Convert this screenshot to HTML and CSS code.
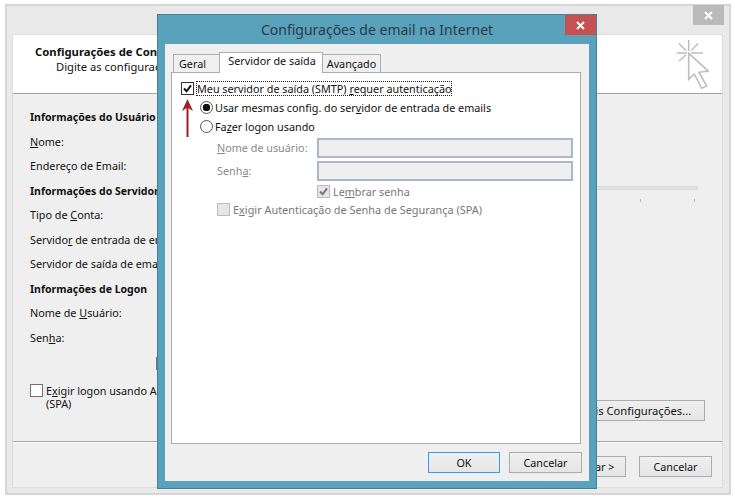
FILE: index.html
```html
<!DOCTYPE html>
<html lang="pt">
<head>
<meta charset="utf-8">
<title>Configurações de email na Internet</title>
<link rel="stylesheet" href="styles.css">
</head>
<body>
<div class="desk">
  <section class="win">
    <div class="win-bar"><button class="win-close"><svg viewBox="0 0 9 9" width="9" height="9"><path d="M1 1l7 7M8 1L1 8" class="x-stroke"/></svg></button></div>
    <div class="win-body">
      <header class="win-head">
        <div class="head-title">Configurações de Conta</div>
        <div class="head-sub">Digite as configurações</div>
        <svg class="head-icon" viewBox="0 0 33 50" width="33" height="50">
          <path class="cur-ray" d="M12.700 0v11M0.700 13H11M15 13h12M3 3.500l7 7M22 3.500l-6.500 7M3 21l7-6"/>
          <path class="cur-arrow" d="M12.700 13.300L32.300 31 23 32.300 30.700 46 25.700 48.300 18.300 34 12.700 39.300z"/>
        </svg>
      </header>
      <div class="win-main">
        <div class="form">
          <div class="row bold">Informações do Usuário</div>
          <div class="row"><u>N</u>ome:</div>
          <div class="row">Endereço de Email:</div>
          <div class="row bold">Informações do Servidor</div>
          <div class="row">Tipo de <u>C</u>onta:</div>
          <div class="row">Servido<u>r</u> de entrada de emails:</div>
          <div class="row">Servidor de saída de emails:</div>
          <div class="row bold">Informações de Logon</div>
          <div class="row">Nome de <u>U</u>suário:</div>
          <div class="row">Sen<u>h</u>a:</div>
          <div class="spa">
            <span class="box box-back"></span>
            <span class="spa-text">E<u>x</u>igir logon usando Autenticação<br>(SPA)</span>
          </div>
        </div>
        <div class="slider"></div>
        <div class="tick tick-a"></div>
        <div class="tick tick-b"></div>
        <div class="stub"></div>
        <button class="btn btn-more">Mais Configurações...</button>
      </div>
      <footer class="win-foot">
        <button class="btn">Avançar &gt;</button>
        <button class="btn">Cancelar</button>
      </footer>
    </div>
  </section>

  <section class="dlg">
    <div class="dlg-bar">
      <div class="dlg-title">Configurações de email na Internet</div>
      <button class="dlg-close"><svg viewBox="0 0 9 9" width="9" height="9"><path d="M1 1l7 7M8 1L1 8" class="x-stroke"/></svg></button>
    </div>
    <div class="dlg-body">
      <div class="tabs">
        <div class="tab tab-a">Geral</div>
        <div class="tab tab-on">Servidor de saída</div>
        <div class="tab tab-c">Avançado</div>
      </div>
      <div class="panel">
        <div class="auth">
          <span class="box box-on"><svg viewBox="0 0 13 13" width="13" height="13"><path class="chk" d="M3 6.500l2.600 2.800L10 3.400"/></svg></span>
          <span class="focus">Meu servidor de saída (SMTP) <u>r</u>equer autenticação</span>
        </div>
        <div class="radio-row"><span class="radio radio-on"></span><span>Usar mesmas config. do ser<u>v</u>idor de entrada de emails</span></div>
        <div class="radio-row radio-second"><span class="radio"></span><span>Fa<u>z</u>er logon usando</span></div>
        <div class="fields">
          <label class="off"><u>N</u>ome de usuário:</label><span class="input"></span>
          <label class="off">Senh<u>a</u>:</label><span class="input"></span>
          <span class="remember"><span class="box box-off"><svg viewBox="0 0 13 13" width="13" height="13"><path class="chk chk-off" d="M3 6.500l2.600 2.800L10 3.400"/></svg></span><span class="off-dim">Le<u>m</u>brar senha</span></span>
        </div>
        <div class="spa-off"><span class="box box-off"></span><span class="off-dim">E<u>x</u>igir Autenticação de Senha de Segurança (SPA)</span></div>
        <svg class="arrow" viewBox="0 0 13 38" width="13" height="38"><path class="arrow-line" d="M6.500 4v34"/><path class="arrow-head" d="M6.500 0L12 12 6.500 8.500 1 12z"/></svg>
      </div>
      <footer class="dlg-foot">
        <button class="btn btn-ok">OK</button>
        <button class="btn">Cancelar</button>
      </footer>
    </div>
  </section>
</div>
</body>
</html>
```
FILE: styles.css
```css
* { box-sizing: border-box; }
html, body { margin: 0; padding: 0; background: #fff; }
body { font: 10.8px/16px "Noto Sans", sans-serif; color: #111; }
u { text-underline-offset: 1px; }
.desk { position: relative; width: 735px; height: 500px; overflow: hidden; }

.win { position: absolute; left: 5px; top: 4px; width: 726px; height: 491px; background: #e9e9e9; border: 2px solid #d6d6d6; padding: 0 6px 5px 5px; display: flex; flex-direction: column; }
.win-bar { height: 28px; flex: none; display: flex; justify-content: flex-end; margin-right: -1px; }
.win-close { width: 31px; height: 20px; margin: -1px 0 0; border: 0; padding: 0; background: #bababa; display: flex; align-items: center; justify-content: center; }
.x-stroke { stroke: #fff; stroke-width: 2; fill: none; }
.win-body { flex: 1; background: #efefef; border: 1px solid #dcdcdc; display: flex; flex-direction: column; min-height: 0; }
.win-head { position: relative; height: 59px; flex: none; background: #fff; border-bottom: 1px solid #a0a0a0; padding: 8px 0 0 22px; }
.head-title { font-weight: 700; font-size: 11.3px; line-height: 17px; }
.head-sub { padding-left: 21px; font-size: 11.2px; line-height: 14px; }
.head-icon { position: absolute; right: 13px; top: 5px; }
.cur-ray { stroke: #bdbdbd; stroke-width: 1.5; fill: none; }
.cur-arrow { stroke: #bdbdbd; stroke-width: 1.6; fill: #fff; }

.win-main { position: relative; flex: 1; min-height: 0; border-bottom: 1px solid #a6a6a6; box-shadow: 0 1px 0 #fff; }
.form { padding: 11px 0 0 17px; }
.row { height: 24.5px; line-height: 24.5px; }
.bold { font-weight: 700; font-size: 10.5px; }
.spa { display: flex; gap: 3px; margin-top: 34px; }
.spa-text { line-height: 13px; }
.box { display: block; flex: none; width: 13px; height: 13px; border: 1px solid #707070; background: #fff; }
.box svg { display: block; margin: -1px; }
.slider { position: absolute; right: 24px; top: 92px; width: 103px; height: 4px; background: #e1e3e2; border: 1px solid #d8dad9; }
.tick { position: absolute; top: 105px; width: 1px; height: 3px; background: #b5b5b5; }
.tick-a { left: 627px; }
.tick-b { left: 681px; }
.stub { position: absolute; left: 143px; top: 263px; width: 2px; height: 13px; background: #777; }
.btn { font: 10.8px/16px "Noto Sans", sans-serif; color: #111; width: 73px; height: 21px; padding: 0; border: 1px solid #acacac; background: linear-gradient(#f0f0f0, #e5e5e5); }
.btn-more { position: absolute; right: 17px; top: 306px; width: 140px; font-size: 11.2px; }
.win-foot { height: 45px; flex: none; display: flex; justify-content: flex-end; gap: 13px; padding: 14px 10px 0 0; }

.dlg { position: absolute; left: 157px; top: 14px; width: 440px; height: 475px; background: #5aa1bb; border: 1px solid #41819b; padding: 0 7px 7px; display: flex; flex-direction: column; }
.dlg-bar { position: relative; height: 29px; flex: none; }
.dlg-title { text-align: center; font-size: 14px; line-height: 30px; color: #2a3a46; }
.dlg-close { position: absolute; right: -7px; top: 0; width: 31px; height: 20px; border: 0; padding: 0; background: #c75050; display: flex; align-items: center; justify-content: center; }
.dlg-body { flex: 1; background: #efefef; padding: 8px 8px 8px 6px; display: flex; flex-direction: column; min-height: 0; }
.tabs { height: 21px; flex: none; display: flex; align-items: flex-end; padding-left: 2px; position: relative; z-index: 1; margin-bottom: -1px; }
.tab { height: 18px; margin: 0 -1px 1px 0; border: 1px solid #acacac; border-bottom: 0; background: #f0f0f0; line-height: 18px; text-align: center; }
.tab-a { width: 47px; padding-right: 8px; }
.tab-c { width: 59px; }
.tab-on { width: 104px; height: 21px; margin-bottom: 0; padding-left: 2px; background: #fff; line-height: 16px; position: relative; z-index: 1; }
.panel { position: relative; flex: 1; min-height: 0; background: #fff; border: 1px solid #acacac; padding: 8px 0 0 9px; }
.auth { display: flex; align-items: center; height: 15px; gap: 2px; }
.box-on { border-color: #333; }
.chk { stroke: #111; stroke-width: 2; fill: none; }
.chk-off { stroke: #777; }
.focus { border: 1px dotted #222; line-height: 13px; height: 15px; white-space: nowrap; }
.radio-row { display: flex; align-items: center; gap: 2px; height: 19px; margin: 2px 0 0 19px; }
.radio-second { margin-top: 0; }
.radio { display: block; width: 13px; height: 13px; flex: none; border: 1px solid #555; border-radius: 50%; background: #fff; }
.radio-on { background: radial-gradient(circle, #111 0 3.500px, #fff 4px); }
.fields { display: grid; grid-template-columns: 100px 256px; grid-auto-rows: 23px; margin: 2px 0 0 36px; }
.fields label { line-height: 20px; }
.off { color: #8a8a8a; }
.off-dim { color: #777; }
.input { height: 20px; background: #efefef; border: 2px solid #a9b7cb; }
.remember { grid-column: 2; display: flex; align-items: center; gap: 3px; height: 15px; }
.box-off { background: #e6e6e6; border-color: #bcbcbc; }
.spa-off { display: flex; align-items: center; gap: 3px; height: 15px; margin: -5px 0 0 36px; font-size: 10.9px; }
.arrow { position: absolute; left: 9px; top: 26px; }
.arrow-line { stroke: #a01e28; stroke-width: 2; fill: none; }
.arrow-head { fill: #a01e28; }
.dlg-foot { height: 29px; flex: none; display: flex; justify-content: flex-end; gap: 9px; padding-top: 8px; margin-right: -1px; }
.btn-ok { width: 72px; border-color: #3b99f0; }
```
